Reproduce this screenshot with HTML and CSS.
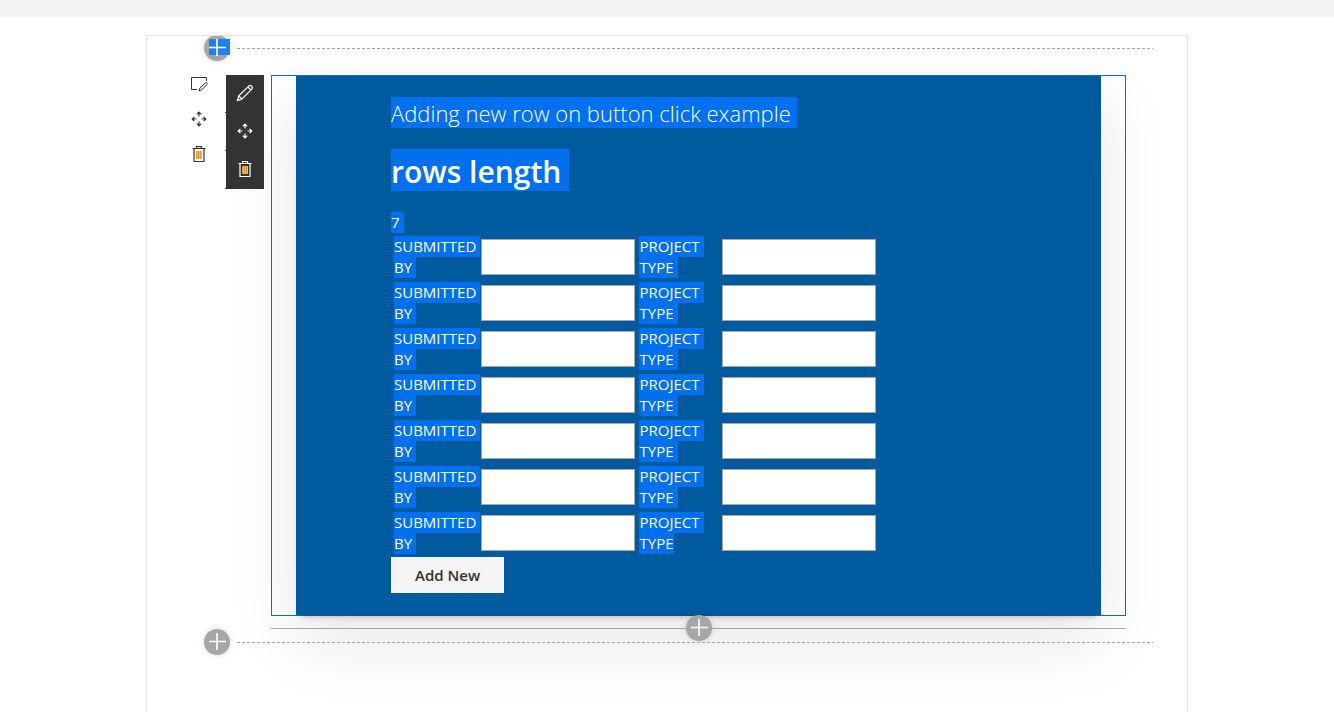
FILE: index.html
```html
<!DOCTYPE html>
<html lang="en">
<head>
<meta charset="utf-8">
<meta name="viewport" content="width=device-width, initial-scale=1">
<title>Workbench</title>
<link rel="stylesheet" href="styles.css">
</head>
<body>
<svg class="defs" aria-hidden="true">
  <symbol id="plus" viewBox="0 0 26 26"><path d="M5 12.500h17M13 4v17" stroke="currentColor" stroke-width="1.600" fill="none"/></symbol>
  <symbol id="section" viewBox="0 0 18 18"><path d="M7 14.500H1.500V2.500h15v3.500" stroke="currentColor" stroke-width="1" fill="none"/><path d="M9 15.800l.9-2.800 5.600-5.200q1-.6 1.600.1t-.1 1.600l-5.400 5.400z" stroke="currentColor" stroke-width="1" fill="none"/></symbol>
  <symbol id="pencil" viewBox="0 0 18 18"><path d="M1.500 16.500l1.300-4.700L13 1.900q1.200-1 2.600.3t.4 2.700L6 15zM2.800 11.800L6 15M11.800 3l3.200 3.200" stroke="currentColor" stroke-width="1.200" fill="none"/></symbol>
  <symbol id="move" viewBox="0 0 18 18"><path d="M9 6.500V2.500M6.800 4.400L9 2.200l2.200 2.200M9 11.500v4M6.800 13.600L9 15.800l2.200-2.200M6.500 9h-4M4.400 6.800L2.200 9l2.200 2.200M11.500 9h4M13.600 6.800L15.800 9l-2.200 2.200" stroke="currentColor" stroke-width="1.200" fill="none"/></symbol>
  <symbol id="trash" viewBox="0 0 18 18"><path d="M2.500 3.500h13M6.500 3V1.500h5V3M4 3.500v13h10v-13" stroke="currentColor" stroke-width="1.200" fill="none"/><path class="bin-bars" d="M6.500 6v8M8.500 6v8M10.500 6v8" stroke-width="1" fill="none"/><path class="bin-gaps" d="M7.500 6v8M9.500 6v8M11.500 6v8" stroke-width="1" fill="none"/></symbol>
</svg>
<header class="topbar"></header>
<main class="canvas">
  <div class="divider">
    <button class="add" type="button" aria-label="Add a new section"><svg class="plus selected"><use href="#plus"/></svg></button>
    <span class="dash"></span>
  </div>
  <section class="zone">
    <div class="zone-tools" role="toolbar" aria-label="Section">
      <button type="button" aria-label="Edit section"><svg><use href="#section"/></svg></button>
      <button type="button" aria-label="Move section"><svg><use href="#move"/></svg></button>
      <button type="button" aria-label="Delete section"><svg><use href="#trash"/></svg></button>
    </div>
    <div class="part-tools" role="toolbar" aria-label="Web part">
      <button type="button" aria-label="Edit web part"><svg><use href="#pencil"/></svg></button>
      <button type="button" aria-label="Move web part"><svg><use href="#move"/></svg></button>
      <button type="button" aria-label="Delete web part"><svg><use href="#trash"/></svg></button>
    </div>
    <div class="part">
      <div class="frame">
        <article class="card">
          <p class="title"><mark>Adding new row on button click example</mark></p>
          <h1 class="heading"><mark>rows length</mark></h1>
          <p class="count"><mark>7</mark></p>
          <table class="rows">
            <tbody>
              <tr><td class="c-by"><label for="by1"><mark>SUBMITTED</mark> <mark>BY</mark></label></td><td class="c-in"><input id="by1" type="text"></td><td class="c-type"><label for="ty1"><mark>PROJECT</mark> <mark>TYPE</mark></label></td><td class="c-in"><input id="ty1" type="text"></td></tr>
              <tr><td><label for="by2"><mark>SUBMITTED</mark> <mark>BY</mark></label></td><td><input id="by2" type="text"></td><td><label for="ty2"><mark>PROJECT</mark> <mark>TYPE</mark></label></td><td><input id="ty2" type="text"></td></tr>
              <tr><td><label for="by3"><mark>SUBMITTED</mark> <mark>BY</mark></label></td><td><input id="by3" type="text"></td><td><label for="ty3"><mark>PROJECT</mark> <mark>TYPE</mark></label></td><td><input id="ty3" type="text"></td></tr>
              <tr><td><label for="by4"><mark>SUBMITTED</mark> <mark>BY</mark></label></td><td><input id="by4" type="text"></td><td><label for="ty4"><mark>PROJECT</mark> <mark>TYPE</mark></label></td><td><input id="ty4" type="text"></td></tr>
              <tr><td><label for="by5"><mark>SUBMITTED</mark> <mark>BY</mark></label></td><td><input id="by5" type="text"></td><td><label for="ty5"><mark>PROJECT</mark> <mark>TYPE</mark></label></td><td><input id="ty5" type="text"></td></tr>
              <tr><td><label for="by6"><mark>SUBMITTED</mark> <mark>BY</mark></label></td><td><input id="by6" type="text"></td><td><label for="ty6"><mark>PROJECT</mark> <mark>TYPE</mark></label></td><td><input id="ty6" type="text"></td></tr>
              <tr><td><label for="by7"><mark>SUBMITTED</mark> <mark>BY</mark></label></td><td><input id="by7" type="text"></td><td><label for="ty7"><mark>PROJECT</mark> <mark class="last">TYPE</mark></label></td><td><input id="ty7" type="text"></td></tr>
            </tbody>
          </table>
          <button class="add-new" type="button">Add New</button>
        </article>
      </div>
      <div class="part-divider">
        <span class="rule"></span>
        <button class="add" type="button" aria-label="Add a new web part"><svg class="plus"><use href="#plus"/></svg></button>
        <span class="rule"></span>
      </div>
    </div>
  </section>
  <div class="divider">
    <button class="add" type="button" aria-label="Add a new section below"><svg class="plus"><use href="#plus"/></svg></button>
    <span class="dash"></span>
  </div>
</main>
</body>
</html>
```

FILE: styles.css
```css
* { box-sizing: border-box; }
html, body { height: 100%; }
body {
  margin: 0;
  display: flex;
  flex-direction: column;
  overflow: hidden;
  background: #fff;
  color: #333;
  font: 15px/21px "Open Sans", "Noto Sans", sans-serif;
}
button { font: inherit; border: 0; padding: 0; background: none; color: inherit; }
.defs { position: absolute; width: 0; height: 0; }
.topbar { flex: none; height: 17px; background: #f3f3f3; }
.canvas {
  flex: 1;
  width: 100%;
  max-width: 1042px;
  margin: 18px auto 0;
  padding: 0 34px 0 57px;
  border: 1px solid #e3e3e3;
  border-bottom: 0;
  overflow: hidden;
}

/* Section dividers */
.divider { position: relative; z-index: 1; display: flex; align-items: center; gap: 7px; height: 26px; margin-top: -1px; }
.add {
  flex: none;
  width: 26px;
  height: 26px;
  border-radius: 50%;
  background: #a6a6a6;
  color: #fff;
  box-shadow: 0 0 6px rgba(0, 0, 0, .15);
}
.plus { display: block; width: 26px; height: 26px; }
.plus.selected { background: linear-gradient(#1f80f0, #1f80f0) 5px 4px / 21px 16px no-repeat; }
.dash { flex: 1; height: 1px; background: repeating-linear-gradient(90deg, #a6a6a6 0 3px, transparent 3px 5px); }

/* Section body */
.zone { display: flex; align-items: flex-start; margin: 14px 27px 0 -18px; }
.zone-tools, .part-tools { display: flex; flex-direction: column; flex: none; color: #333; }
.zone-tools { width: 26px; gap: 17px; margin-right: 14px; }
.zone-tools svg, .part-tools svg { display: block; width: 18px; height: 18px; margin: 0 auto; }
.bin-bars { stroke: #d99a35; }
.bin-gaps { stroke: #9ccbe8; }
.part-tools { position: relative; z-index: 1; width: 38px; margin-right: 7px; background: #333; color: #fff; }
.part-tools button { position: relative; height: 38px; padding-bottom: 3px; }
.part-tools button::before {
  content: "";
  position: absolute;
  left: -1px;
  bottom: 0;
  width: 1px;
  height: 1px;
  background: #0a70c8;
}
.part { flex: 1; min-width: 0; }
.frame { padding: 0 24px; border: 1px solid #0a70c8; }
.card {
  padding: 21px 95px 22px;
  background: #005a9e;
  color: #fff;
  box-shadow: 0 6px 6px -5px rgba(0, 0, 0, .3), 0 25px 65px rgba(0, 0, 0, .1);
}

/* Highlighted text */
mark { display: inline-block; padding-right: 4px; background: #0070f0; color: inherit; vertical-align: top; }
mark.last { padding-right: 0; }
.title, .heading, .count { margin: 0; }
.title { margin-bottom: 21px; font-size: 22px; line-height: 29px; font-weight: 300; }
.title mark { padding: 2px 6px 0 0; }
.heading { margin-bottom: 21px; font-size: 30px; line-height: 38px; font-weight: 600; }
.heading mark { padding: 4px 8px 0 0; }

/* Rows */
.rows { table-layout: fixed; width: 488px; border-spacing: 2px; }
.rows td { padding: 1px; vertical-align: middle; }
.c-by { width: 85px; }
.c-in { width: 156px; }
.c-type { width: 80px; }
.rows label, .rows input { display: block; }
.rows input { width: 100%; height: 36px; padding: 0 8px; border: 1px solid #a6a6a6; background: #fff; font: inherit; }
.add-new { display: block; height: 36px; padding: 0 24px; background: #f4f4f4; color: #333; font-weight: 600; }

.part-divider { position: relative; z-index: 1; display: flex; align-items: center; height: 26px; margin-top: -1px; }
.rule { flex: 1; height: 1px; background: #a6a6a6; }
.zone + .divider { margin-top: -12px; }
```
